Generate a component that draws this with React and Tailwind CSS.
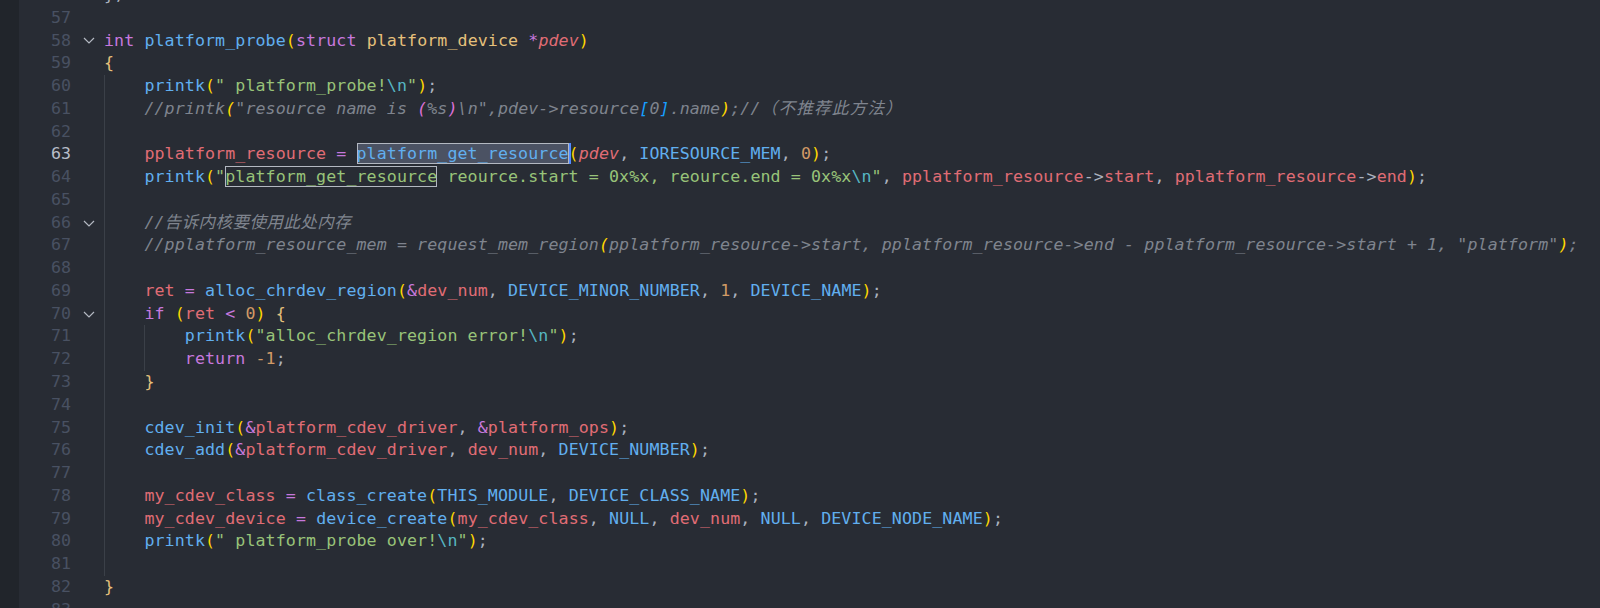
import React from "react";

// token colour classes (one dark)
const kw = "text-[#c678dd]";
const fn = "text-[#61afef]";
const vr = "text-[#e06c75]";
const st = "text-[#98c379]";
const es = "text-[#56b6c2]";
const nm = "text-[#d19a66]";
const ty = "text-[#e5c07b]";
const pu = "text-[#abb2bf]";
const br = "text-[#ffd700]";
const cb = "text-[#e5c07b]";
const op = "text-[#c678dd]";
const ar = "text-[#abb2bf]";
const cm = "text-[#7f848e] italic";
const cmWide = "text-[#7f848e] italic tracking-[1.2px]";
const cmCjk = "text-[#7f848e] italic tracking-[0.35px]";
const cmBr = "text-[#ffd700] italic";
const cmPk = "text-[#da70d6] italic";
const cmBl = "text-[#179fff] italic";
const it = "text-[#e06c75] italic";

const lines = [
  { n: 56, g: 0, t: [[pu, "};"]] },
  { n: 57, g: 0, t: [] },
  {
    n: 58, g: 0, fold: true,
    t: [[kw, "int"], [pu, " "], [fn, "platform_probe"], [br, "("], [kw, "struct"], [pu, " "], [ty, "platform_device"], [pu, " "], [kw, "*"], [it, "pdev"], [br, ")"]],
  },
  { n: 59, g: 0, t: [[cb, "{"]] },
  {
    n: 60, g: 1,
    t: [[fn, "printk"], [br, "("], [st, "\" platform_probe!"], [es, "\\n"], [st, "\""], [br, ")"], [pu, ";"]],
  },
  {
    n: 61, g: 1,
    t: [[cm, "//printk"], [cmBr, "("], [cm, "\"resource name is "], [cmPk, "("], [cm, "%s"], [cmPk, ")"], [cm, "\\n\",pdev->resource"], [cmBl, "["], [cm, "0"], [cmBl, "]"], [cm, ".name"], [cmBr, ")"], [cm, ";//"], [cmWide, "（不推荐此方法）"]],
  },
  { n: 62, g: 1, t: [] },
  {
    n: 63, g: 1, active: true,
    t: [[vr, "pplatform_resource"], [pu, " "], [op, "="], [pu, " "], ["sel", "platform_get_resource"], [br, "("], [it, "pdev"], [pu, ", "], [fn, "IORESOURCE_MEM"], [pu, ", "], [nm, "0"], [br, ")"], [pu, ";"]],
  },
  {
    n: 64, g: 1,
    t: [[fn, "printk"], [br, "("], [st, "\""], ["match", "platform_get_resource"], [st, " reource.start = 0x%x, reource.end = 0x%x"], [es, "\\n"], [st, "\""], [pu, ", "], [vr, "pplatform_resource"], [ar, "->"], [vr, "start"], [pu, ", "], [vr, "pplatform_resource"], [ar, "->"], [vr, "end"], [br, ")"], [pu, ";"]],
  },
  { n: 65, g: 1, t: [] },
  { n: 66, g: 1, fold: true, t: [[cm, "//"], [cmCjk, "告诉内核要使用此处内存"]] },
  {
    n: 67, g: 1,
    t: [[cm, "//pplatform_resource_mem = request_mem_region"], [cmBr, "("], [cm, "pplatform_resource->start, pplatform_resource->end - pplatform_resource->start + 1, \"platform\""], [cmBr, ")"], [cm, ";"]],
  },
  { n: 68, g: 1, t: [] },
  {
    n: 69, g: 1,
    t: [[vr, "ret"], [pu, " "], [op, "="], [pu, " "], [fn, "alloc_chrdev_region"], [br, "("], [op, "&"], [vr, "dev_num"], [pu, ", "], [fn, "DEVICE_MINOR_NUMBER"], [pu, ", "], [nm, "1"], [pu, ", "], [fn, "DEVICE_NAME"], [br, ")"], [pu, ";"]],
  },
  {
    n: 70, g: 1, fold: true,
    t: [[kw, "if"], [pu, " "], [br, "("], [vr, "ret"], [pu, " "], [op, "<"], [pu, " "], [nm, "0"], [br, ")"], [pu, " "], [cb, "{"]],
  },
  {
    n: 71, g: 2,
    t: [[fn, "printk"], [br, "("], [st, "\"alloc_chrdev_region error!"], [es, "\\n"], [st, "\""], [br, ")"], [pu, ";"]],
  },
  { n: 72, g: 2, t: [[kw, "return"], [pu, " "], [nm, "-1"], [pu, ";"]] },
  { n: 73, g: 1, t: [[cb, "}"]] },
  { n: 74, g: 1, t: [] },
  {
    n: 75, g: 1,
    t: [[fn, "cdev_init"], [br, "("], [op, "&"], [vr, "platform_cdev_driver"], [pu, ", "], [op, "&"], [vr, "platform_ops"], [br, ")"], [pu, ";"]],
  },
  {
    n: 76, g: 1,
    t: [[fn, "cdev_add"], [br, "("], [op, "&"], [vr, "platform_cdev_driver"], [pu, ", "], [vr, "dev_num"], [pu, ", "], [fn, "DEVICE_NUMBER"], [br, ")"], [pu, ";"]],
  },
  { n: 77, g: 1, t: [] },
  {
    n: 78, g: 1,
    t: [[vr, "my_cdev_class"], [pu, " "], [op, "="], [pu, " "], [fn, "class_create"], [br, "("], [fn, "THIS_MODULE"], [pu, ", "], [fn, "DEVICE_CLASS_NAME"], [br, ")"], [pu, ";"]],
  },
  {
    n: 79, g: 1,
    t: [[vr, "my_cdev_device"], [pu, " "], [op, "="], [pu, " "], [fn, "device_create"], [br, "("], [vr, "my_cdev_class"], [pu, ", "], [fn, "NULL"], [pu, ", "], [vr, "dev_num"], [pu, ", "], [fn, "NULL"], [pu, ", "], [fn, "DEVICE_NODE_NAME"], [br, ")"], [pu, ";"]],
  },
  {
    n: 80, g: 1,
    t: [[fn, "printk"], [br, "("], [st, "\" platform_probe over!"], [es, "\\n"], [st, "\""], [br, ")"], [pu, ";"]],
  },
  { n: 81, g: 1, t: [] },
  { n: 82, g: 0, t: [[cb, "}"]] },
  { n: 83, g: 0, t: [] },
];

function Chevron() {
  return (
    <svg width="12" height="7" viewBox="0 0 12 7" className="text-[#b4b9c2]">
      <polyline points="1,1 6,6 11,1" fill="none" stroke="currentColor" strokeWidth="1.2" />
    </svg>
  );
}

function Token({ cls, text }) {
  if (cls === "sel") {
    return (
      <span className="inline-block leading-[21px] bg-[#4b5263] text-[#61afef] shadow-[inset_0_0_0_1px_#b3b8c1,2px_0_0_0_#528bff]">
        {text}
      </span>
    );
  }
  if (cls === "match") {
    return (
      <span className="inline-block leading-[21px] text-[#98c379] shadow-[inset_0_0_0_1px_#b3b8c1]">
        {text}
      </span>
    );
  }
  return <span className={cls}>{text}</span>;
}

function CodeLine({ line }) {
  return (
    <div className="flex h-[22.78px]">
      <div
        className={
          line.active
            ? "w-[52px] shrink-0 text-right leading-[22.78px] text-[#b8bec9]"
            : "w-[52px] shrink-0 text-right leading-[22.78px] text-[#495162]"
        }
      >
        {line.n}
      </div>
      <div className="flex w-[33px] shrink-0 items-center justify-center pl-[2px]">
        {line.fold && <Chevron />}
      </div>
      <div className="flex min-w-0 flex-1">
        {line.g >= 1 && <span className="w-[40.4px] shrink-0 border-l border-[#3b4048]" />}
        {line.g >= 2 && <span className="w-[40.4px] shrink-0 border-l border-[#3b4048]" />}
        <div className="whitespace-pre leading-[22.78px] tracking-[0.1px]">
          {line.t.map(([cls, text], i) => (
            <Token key={i} cls={cls} text={text} />
          ))}
        </div>
      </div>
    </div>
  );
}

export default function App() {
  return (
    <div className="flex h-[608px] w-[1600px] overflow-hidden bg-[#282c34] font-['DejaVu_Sans_Mono','Noto_Sans_CJK_SC',monospace] text-[16.63px] text-[#abb2bf]">
      <div className="w-[19px] shrink-0 bg-[#21252b]" />
      <div className="-mt-[16px] flex flex-1 flex-col">
        {lines.map((line) => (
          <CodeLine key={line.n} line={line} />
        ))}
      </div>
    </div>
  );
}
